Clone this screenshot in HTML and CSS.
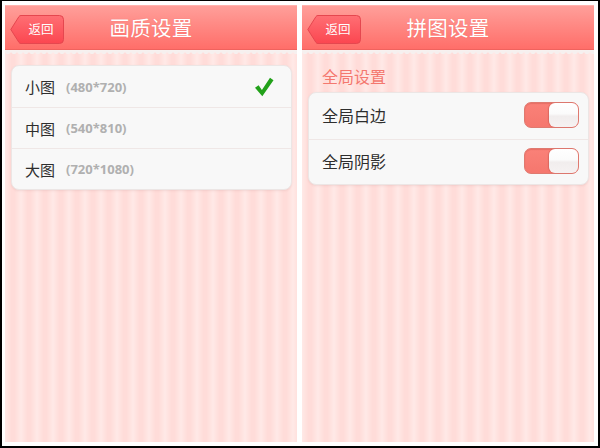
FILE: index.html
```html
<!DOCTYPE html>
<html lang="zh-CN">
<head>
<meta charset="utf-8">
<title>设置</title>
<link rel="stylesheet" href="styles.css">
</head>
<body>
<div class="frame">
  <section class="phone">
    <header class="nav">
      <button class="back">
        <svg class="back-shape" width="54" height="29" viewBox="0 0 54 29" aria-hidden="true">
          <defs>
            <linearGradient id="bg1" x1="0" y1="0" x2="0" y2="1">
              <stop offset="0" stop-color="#ff6f74"/>
              <stop offset="1" stop-color="#fb4650"/>
            </linearGradient>
          </defs>
          <path d="M0.8 14.5 L9 1.5 Q9.6 0.5 11 0.5 L49.5 0.5 Q53.5 0.5 53.5 4.5 L53.5 24.5 Q53.5 28.5 49.5 28.5 L11 28.5 Q9.6 28.5 9 27.5 Z" fill="url(#bg1)" stroke="#e5474f" stroke-width="1"/>
        </svg>
        <span class="back-text">返回</span>
      </button>
      <h1 class="title">画质设置</h1>
      <span></span>
    </header>
    <div class="content">
      <div class="scallop"></div>
      <ul class="card card-quality">
        <li class="row"><span class="name">小图</span><span class="size">(480*720)</span>
          <svg class="check" width="20" height="20" viewBox="0 0 20 20" aria-hidden="true"><path d="M1 10.8 L4.6 8.3 L7.9 13 L16 0.8 L19.5 3.2 L8.3 19.2 Z" fill="#22a11a"/></svg>
        </li>
        <li class="row"><span class="name">中图</span><span class="size">(540*810)</span></li>
        <li class="row"><span class="name">大图</span><span class="size">(720*1080)</span></li>
      </ul>
    </div>
  </section>
  <section class="phone">
    <header class="nav">
      <button class="back">
        <svg class="back-shape" width="54" height="29" viewBox="0 0 54 29" aria-hidden="true">
          <defs>
            <linearGradient id="bg2" x1="0" y1="0" x2="0" y2="1">
              <stop offset="0" stop-color="#ff6f74"/>
              <stop offset="1" stop-color="#fb4650"/>
            </linearGradient>
          </defs>
          <path d="M0.8 14.5 L9 1.5 Q9.6 0.5 11 0.5 L49.5 0.5 Q53.5 0.5 53.5 4.5 L53.5 24.5 Q53.5 28.5 49.5 28.5 L11 28.5 Q9.6 28.5 9 27.5 Z" fill="url(#bg2)" stroke="#e5474f" stroke-width="1"/>
        </svg>
        <span class="back-text">返回</span>
      </button>
      <h1 class="title">拼图设置</h1>
      <span></span>
    </header>
    <div class="content">
      <div class="scallop"></div>
      <div class="section-label">全局设置</div>
      <ul class="card card-puzzle">
        <li class="row row-tall"><span class="name name-lg">全局白边</span><span class="toggle"><span class="knob"></span></span></li>
        <li class="row row-tall"><span class="name name-lg">全局阴影</span><span class="toggle"><span class="knob"></span></span></li>
      </ul>
    </div>
  </section>
</div>
</body>
</html>
```

FILE: styles.css
```css
* { box-sizing: border-box; }
html, body { margin: 0; padding: 0; background: #fff; }
body { font-family: "Noto Sans CJK SC", "Noto Sans", sans-serif; }

.frame {
  width: 600px;
  height: 448px;
  border-style: solid;
  border-color: #000;
  border-width: 1px 2px 2px 2px;
  padding: 4px 4px 4px 3px;
  display: flex;
  gap: 5px;
  background: #fff;
}

.phone {
  width: 292px;
  height: 437px;
  display: flex;
  flex-direction: column;
}

.nav {
  height: 45px;
  flex: none;
  display: grid;
  grid-template-columns: 1fr auto 1fr;
  align-items: center;
  background: linear-gradient(#ff9f9a 0%, #ff8b86 40%, #ff6e69 100%);
  border-top: 1px solid #ffb3ae;
  border-bottom: 1px solid #f0635e;
}

.back {
  justify-self: start;
  margin: 3px 0 0 5px;
  padding: 0;
  border: 0;
  background: none;
  width: 54px;
  height: 29px;
  display: grid;
  place-items: center;
}
.back > * { grid-area: 1 / 1; }
.back-shape { display: block; }
.back-text {
  color: #fff;
  font-size: 12.5px;
  font-family: "Noto Sans CJK SC", sans-serif;
  padding-left: 8px;
  line-height: 1;
}

.title {
  margin: 0;
  color: #fff;
  font-size: 20.5px;
  font-weight: 400;
  letter-spacing: 0.3px;
  line-height: 1;
  text-shadow: 0 0 1px rgba(200, 60, 60, 0.4);
}

.content {
  flex: 1;
  display: flex;
  flex-direction: column;
  background:
    repeating-linear-gradient(90deg,
      #ffe9e7 0px, #ffe3e0 3px, #ffdcd9 6.5px, #ffdcd9 9.5px, #ffe3e0 13px, #ffe9e7 16px);
}

.scallop {
  height: 6px;
  flex: none;
  background:
    radial-gradient(circle at 3px 0, #f6f0ef 2.6px, rgba(246,240,239,0) 3.4px) 0 1px / 6px 5px repeat-x,
    linear-gradient(#f7f1f0, #f7f1f0) 0 0 / 100% 2px no-repeat;
}

.card {
  list-style: none;
  margin: 0 5px 0 6px;
  padding: 0;
  background: #f8f8f8;
  border: 1px solid #ece6e5;
  border-radius: 8px;
  box-shadow: 0 1px 2px rgba(180, 120, 120, 0.15);
}

.card-quality { margin-top: 9px; }

.row {
  height: 41px;
  display: flex;
  align-items: center;
  padding: 0 17px 0 13px;
  border-top: 1px solid #efe7e6;
}
.row:first-child { border-top: 0; }
.row-tall { height: 45.5px; padding-right: 9px; }

.name {
  font-size: 15px;
  color: #2e2e2e;
  line-height: 1;
}
.name-lg { font-size: 16px; }
.card-puzzle .row { padding-bottom: 2px; }

.size {
  margin-left: 11px;
  font-family: "Open Sans", "Liberation Sans", sans-serif;
  font-weight: 700;
  font-size: 13px;
  color: #b0b0b0;
}

.check { margin-left: auto; display: block; }

.section-label {
  margin: 10px 0 6px 20px;
  font-size: 16px;
  line-height: 20px;
  color: #f4786f;
}

.toggle {
  margin-left: auto;
  width: 55px;
  height: 26px;
  border: 1px solid #df7a70;
  border-radius: 7px;
  background: linear-gradient(#fa8178, #f5776e);
  display: flex;
  justify-content: flex-end;
  box-shadow: inset 0 1px 1px rgba(160, 40, 30, 0.2);
}
.knob {
  width: 29px;
  height: 24px;
  border-radius: 6px;
  background: linear-gradient(#ffffff 0%, #fbfbfb 45%, #f1eded 55%, #f6f2f2 100%);
  box-shadow: -1px 0 1px rgba(170, 70, 60, 0.35);
}
```
